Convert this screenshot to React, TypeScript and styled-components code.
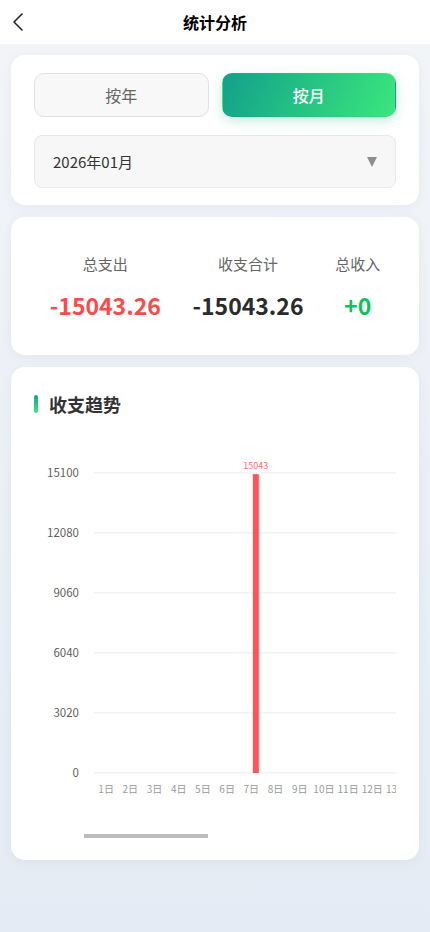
import React from "react";
import styled, { createGlobalStyle } from "styled-components";

const GlobalStyle = createGlobalStyle`
  * { box-sizing: border-box; }
  html, body { margin: 0; padding: 0; }
  body {
    font-family: "Noto Sans CJK SC", "Noto Sans", sans-serif;
    background: #eef2f7;
  }
`;

const CAT_W = 24.2;
const PLOT_X = 60;
const CHART_W = 362;
const GRID_TOP = 28;
const GRID_STEP = 60;
const Y_TICKS = [15100, 12080, 9060, 6040, 3020, 0];
const expense: Record<number, number> = { 7: 15043 };
const VISIBLE_DAYS = Math.ceil((CHART_W - PLOT_X) / CAT_W);

/** 상단 네비게이션 */
const Header = (): JSX.Element => {
  return (
    <HeaderS>
      <BackBtnS aria-label="back">
        <svg width="20" height="20" viewBox="0 0 20 20">
          <polyline points="13,2 5,10 13,18" fill="none" stroke="#222" strokeWidth="1.6" strokeLinecap="round" strokeLinejoin="round" />
        </svg>
      </BackBtnS>
      <TitleS>统计分析</TitleS>
    </HeaderS>
  );
};

/** 월 / 년 선택 */
const PeriodCard = (): JSX.Element => {
  return (
    <CardS $pad="18px 23px 17px">
      <ToggleRowS>
        <ToggleBtnS>按年</ToggleBtnS>
        <ToggleBtnS $active>按月</ToggleBtnS>
      </ToggleRowS>
      <SelectS>
        <span>2026年01月</span>
        <CaretS />
      </SelectS>
    </CardS>
  );
};

/** 합계 */
const SummaryCard = (): JSX.Element => {
  return (
    <CardS $pad="36px 23px 33px">
      <SummaryRowS>
        <SummaryColS>
          <SumLabelS>总支出</SumLabelS>
          <SumValueS $color="#fa4b4b">-15043.26</SumValueS>
        </SummaryColS>
        <SummaryColS>
          <SumLabelS>收支合计</SumLabelS>
          <SumValueS $color="#2b2b2b">-15043.26</SumValueS>
        </SummaryColS>
        <SummaryColS>
          <SumLabelS>总收入</SumLabelS>
          <SumValueS $color="#0cc25f">+0</SumValueS>
        </SummaryColS>
      </SummaryRowS>
    </CardS>
  );
};

/** 추세 차트 */
const TrendChart = (): JSX.Element => {
  const maxV = Y_TICKS[0];
  const baseY = GRID_TOP + GRID_STEP * 5;
  return (
    <svg width={CHART_W} height={360} viewBox={`0 0 ${CHART_W} 360`}>
      <defs>
        <clipPath id="plot">
          <rect x={PLOT_X} y={0} width={CHART_W - PLOT_X} height={360} />
        </clipPath>
      </defs>
      {Y_TICKS.map((t, i) => (
        <text key={t} x={45} y={GRID_TOP + i * GRID_STEP + 4} textAnchor="end" fontSize="11.5" fill="#5f5f5f" fontFamily="'Noto Sans CJK SC', sans-serif">
          {t}
        </text>
      ))}
      <g clipPath="url(#plot)">
        {Y_TICKS.map((t, i) => (
          <rect key={t} x={PLOT_X} y={GRID_TOP + i * GRID_STEP - 1} width={CHART_W - PLOT_X} height={1.6} fill="#f3f3f3" />
        ))}
        {Array.from({ length: VISIBLE_DAYS }, (_, i) => {
          const day = i + 1;
          const cx = PLOT_X + (i + 0.5) * CAT_W;
          const v = expense[day] || 0;
          const h = (v / maxV) * (GRID_STEP * 5);
          return (
            <g key={day}>
              {v > 0 && (
                <>
                  <rect x={cx + 1.5} y={baseY - h} width={6} height={h} fill="#fd5555" />
                  <text x={cx + 4.5} y={baseY - h - 5} textAnchor="middle" fontSize="9" fill="#ff6b6b" fontFamily="'Noto Sans CJK SC', sans-serif">
                    {v}
                  </text>
                </>
              )}
              <text x={cx} y={baseY + 20} textAnchor="middle" fontSize="10" fill="#9a9a9a" fontFamily="'Noto Sans CJK SC', sans-serif">
                {day}日
              </text>
            </g>
          );
        })}
      </g>
    </svg>
  );
};

const TrendCard = (): JSX.Element => {
  return (
    <CardS $pad="24px 23px 22px">
      <SectionTitleS>
        <AccentS />
        <h2>收支趋势</h2>
      </SectionTitleS>
      <ChartWrapS>
        <TrendChart />
      </ChartWrapS>
      <ScrollTrackS>
        <ScrollThumbS />
      </ScrollTrackS>
    </CardS>
  );
};

export default function App(): JSX.Element {
  return (
    <>
      <GlobalStyle />
      <PageS>
        <Header />
        <ContentS>
          <PeriodCard />
          <SummaryCard />
          <TrendCard />
        </ContentS>
      </PageS>
    </>
  );
}

const PageS = styled.div`
  min-height: 100vh;
  background: linear-gradient(180deg, #f3f5f8 0%, #e4ebf4 100%);
`;

const HeaderS = styled.header`
  position: relative;
  height: 44px;
  background: #fff;
  display: flex;
  align-items: center;
  justify-content: center;
`;

const BackBtnS = styled.button`
  position: absolute;
  left: 9px;
  top: 12px;
  width: 20px;
  height: 20px;
  padding: 0;
  border: none;
  background: none;
  display: flex;
`;

const TitleS = styled.h1`
  margin: 0;
  font-size: 16px;
  font-weight: 700;
  color: #000;
`;

const ContentS = styled.main`
  display: flex;
  flex-direction: column;
  gap: 12px;
  padding: 11px 11px 0;
`;

const CardS = styled.section<{ $pad: string }>`
  background: #fff;
  border-radius: 14px;
  padding: ${(p) => p.$pad};
  box-shadow: 0 2px 12px rgba(60, 80, 120, 0.06);
`;

const ToggleRowS = styled.div`
  display: grid;
  grid-template-columns: 1fr 1fr;
  gap: 13px;
`;

const ToggleBtnS = styled.button<{ $active?: boolean }>`
  height: 44px;
  border-radius: 10px;
  font-family: inherit;
  font-size: 16px;
  border: 1px solid ${(p) => (p.$active ? "transparent" : "#e2e2e2")};
  background: ${(p) => (p.$active ? "linear-gradient(115deg, #13a08b 0%, #3ae77d 100%)" : "#f8f8f8")};
  color: ${(p) => (p.$active ? "#fff" : "#666")};
  font-weight: ${(p) => (p.$active ? 500 : 400)};
  box-shadow: ${(p) => (p.$active ? "0 4px 12px rgba(30, 180, 130, 0.25)" : "none")};
`;

const SelectS = styled.div`
  margin-top: 18px;
  height: 53px;
  border: 1px solid #e8e8e8;
  border-radius: 8px;
  background: #f7f7f7;
  padding: 0 18px;
  display: flex;
  align-items: center;
  justify-content: space-between;
  font-size: 15px;
  color: #333;
`;

const CaretS = styled.i`
  width: 0;
  height: 0;
  border-left: 5.5px solid transparent;
  border-right: 5.5px solid transparent;
  border-top: 10px solid #8e8e8e;
`;

const SummaryRowS = styled.div`
  display: flex;
  justify-content: space-around;
`;

const SummaryColS = styled.div`
  display: flex;
  flex-direction: column;
  align-items: center;
  gap: 13px;
`;

const SumLabelS = styled.span`
  font-size: 15px;
  line-height: 22px;
  color: #666;
`;

const SumValueS = styled.span<{ $color: string }>`
  font-size: 23px;
  line-height: 34px;
  font-weight: 700;
  color: ${(p) => p.$color};
`;

const SectionTitleS = styled.div`
  display: flex;
  align-items: center;
  gap: 11px;
  height: 26px;

  h2 {
    margin: 0;
    font-size: 18px;
    font-weight: 700;
    color: #333;
  }
`;

const AccentS = styled.span`
  width: 4px;
  height: 18px;
  border-radius: 2px;
  background: linear-gradient(180deg, #13a587, #3ae77d);
`;

const ChartWrapS = styled.div`
  margin-top: 28px;
  height: 360px;
  display: flex;
`;

const ScrollTrackS = styled.div`
  margin-top: 29px;
  height: 4px;
  padding-left: 50px;
`;

const ScrollThumbS = styled.div`
  width: 124px;
  height: 4px;
  background: #bbbbbb;
`;
